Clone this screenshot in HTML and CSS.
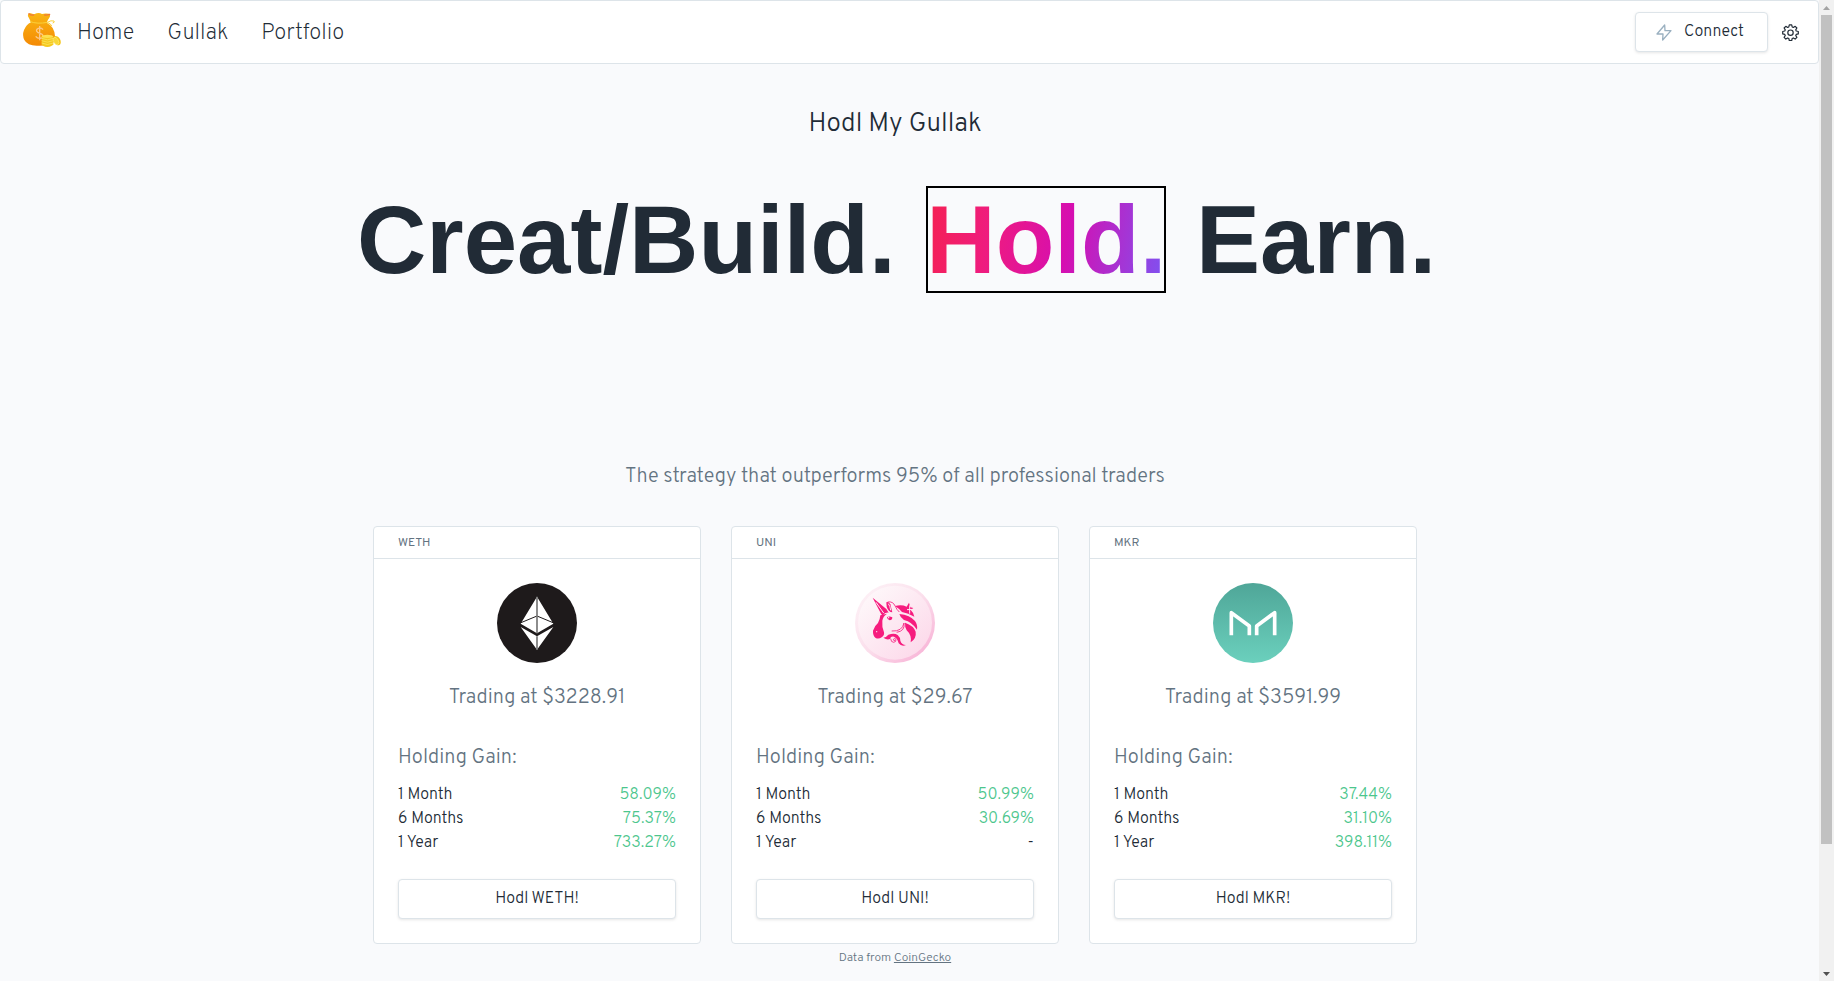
FILE: index.html
```html
<!DOCTYPE html>
<html lang="en">
<head>
<meta charset="utf-8">
<title>Hodl My Gullak</title>
<link rel="stylesheet" href="styles.css">
</head>
<body>
<header class="topbar">
  <svg class="logo" viewBox="66 33 120 108" aria-hidden="true">
    <defs>
      <linearGradient id="bag" x1="0" y1="0" x2="0" y2="1"><stop offset="0" stop-color="#f9b613"/><stop offset="1" stop-color="#f48a05"/></linearGradient>
    </defs>
    <path d="M93 64 Q89 55 84 46 Q82 36 92 37 Q102 42 110 37 Q118 34 126 39 Q134 36 147 38 Q153 42 148 50 Q142 58 140 65 Q163 76 165 105 Q166 122 154 130 Q140 135 110 134 Q82 134 73 117 Q66 102 72 87 Q79 71 93 64Z" fill="url(#bag)"/>
    <path d="M87 38 Q93 44 101 42 M134 42 Q142 43 149 40" fill="none" stroke="#ee7a3a" stroke-width="4" stroke-linecap="round"/>
    <path d="M91 62 Q112 70 142 64 Q153 57 162 60 Q165 64 159 66 M143 65 Q152 67 155 74" fill="none" stroke="#fbd13b" stroke-width="3" stroke-linecap="round"/>
    <path d="M129 86 Q124 79 115 82 Q105 87 113 94 L125 99 Q133 106 125 111 Q114 115 107 106 M119 75 V118" fill="none" stroke="#fcc88a" stroke-width="4"/>
    <path d="M125 105 V130 Q127 137 142 138 Q157 137 160 130 V105Z" fill="#f5c91f"/>
    <ellipse cx="142" cy="106" rx="17" ry="5" fill="#fde04f"/>
    <path d="M125 112 Q142 121 160 112 M125 119 Q142 128 160 119 M125 126 Q142 135 160 126" fill="none" stroke="#fdea6d" stroke-width="2"/>
    <ellipse cx="171" cy="119" rx="10" ry="15" transform="rotate(-28 171 119)" fill="#f4c417"/>
    <ellipse cx="168" cy="120" rx="7" ry="12" transform="rotate(-28 168 120)" fill="#f8d637" stroke="#fdea6d" stroke-width="2"/>
  </svg>
  <nav class="nav">
    <a href="#">Home</a>
    <a href="#">Gullak</a>
    <a href="#">Portfolio</a>
  </nav>
  <button class="btn connect" type="button">
    <svg class="bolt" viewBox="168 68 48 51" aria-hidden="true"><path d="M194 71 L171 98 H189 L188 116 L213 88 H195Z" fill="none" stroke="#9ab0c0" stroke-width="4" stroke-linejoin="round"/></svg>
    Connect
  </button>
  <button class="settings" type="button" aria-label="Settings">
    <svg viewBox="0 0 24 24" aria-hidden="true"><path d="M10.300 1.300h3.400l.7 2.900 1.600.7 2.600-1.600 2.400 2.400-1.600 2.600.7 1.600 2.900.7v3.400l-2.900.7-.7 1.600 1.600 2.600-2.400 2.400-2.600-1.600-1.600.7-.7 2.900h-3.400l-.7-2.900-1.600-.7-2.600 1.600L3 18.900l1.600-2.600-.7-1.600-2.900-.7v-3.400l2.900-.7.7-1.600L3 5.700l2.400-2.400L8 4.900l1.600-.7z" fill="none" stroke="#212b36" stroke-width="1.700" stroke-linejoin="round"/><circle cx="12" cy="12.300" r="3.800" fill="none" stroke="#212b36" stroke-width="1.700"/></svg>
  </button>
</header>

<main class="page">
  <h2 class="brand">Hodl My Gullak</h2>
  <h1 class="headline">Creat/Build. <span class="accent">Hold.</span> Earn.</h1>
  <p class="tagline">The strategy that outperforms 95% of all professional traders</p>

  <section class="cards">
    <article class="card">
      <h3 class="card-title">WETH</h3>
      <div class="card-body">
        <svg class="coin" viewBox="396 189 240 240" aria-hidden="true">
          <circle cx="516" cy="309" r="120" fill="#1e1a1b"/>
          <path d="M516 230 L565 311 L516 340 L467 311Z M467 321 L516 349 L565 321 L516 389Z" fill="#fff"/>
          <path d="M468 308 L516 288 L564 308" fill="none" stroke="#1e1a1b" stroke-width="3"/>
          <path d="M516 230 V340 M516 349 V389" stroke="#777" stroke-width="5"/>
        </svg>
        <p class="price">Trading at $3228.91</p>
        <h4 class="gain-title">Holding Gain:</h4>
        <table class="gains">
          <tr><th scope="row">1 Month</th><td>58.09%</td></tr>
          <tr><th scope="row">6 Months</th><td>75.37%</td></tr>
          <tr><th scope="row">1 Year</th><td>733.27%</td></tr>
        </table>
        <button class="btn" type="button">Hodl WETH!</button>
      </div>
    </article>
    <article class="card">
      <h3 class="card-title">UNI</h3>
      <div class="card-body">
        <svg class="coin" viewBox="390 189 240 240" aria-hidden="true">
          <defs>
            <linearGradient id="rim" x1=".1" y1=".1" x2=".9" y2=".9"><stop offset="0" stop-color="#fdf1f6"/><stop offset=".5" stop-color="#fbdfec"/><stop offset="1" stop-color="#f8b4d7"/></linearGradient>
            <linearGradient id="disc" x1=".1" y1=".1" x2=".9" y2=".9"><stop offset="0" stop-color="#fef8fa"/><stop offset="1" stop-color="#fcd9ea"/></linearGradient>
          </defs>
          <circle cx="510" cy="309" r="120" fill="url(#rim)"/>
          <circle cx="510" cy="308" r="111" fill="url(#disc)"/>
          <g fill="#f61c7e">
            <path d="M443 233 L484 267 L491 278 Q480 276 473 287 L468 281Z"/>
            <path d="M484 247 Q490 243 496 253 L502 277 Q490 276 485 260Z"/>
            <path d="M466 286 L486 281 Q474 289 472 302 Q470 320 477 337 Q479 346 470 352 Q461 358 452 354 Q443 346 444 332 Q448 318 459 309 Q465 298 466 286Z"/>
            <path d="M486 291 Q494 287 502 292 Q502 301 494 301 Q487 300 486 291Z"/>
            <path d="M510 258 Q530 253 545 260 L552 248 L556 262 L565 264 L557 270 Q566 278 568 290 Q550 279 531 276 Q520 264 510 258Z"/>
            <path d="M523 282 Q555 285 570 303 Q579 316 576 329 Q561 306 537 300 Q526 293 523 282Z"/>
            <path d="M540 308 Q566 317 572 335 Q575 355 557 367 Q561 346 545 331 Q539 320 540 308Z"/>
            <path d="M475 353 Q484 352 490 344 Q508 338 518 345 Q526 352 526 362 Q529 374 543 375 Q530 381 521 370 Q517 354 507 350 Q497 348 495 357 Q486 361 475 353Z"/>
          </g>
          <g fill="none" stroke="#f61c7e" stroke-width="2.500">
            <path d="M488 246 Q504 243 511 259 Q515 269 523 276 M500 333 Q532 335 537 309 Q541 333 515 337"/>
            <path d="M497 356 Q498 367 506 367 Q514 366 513 358 Q509 353 505 358 Q505 363 510 361"/>
          </g>
          <path d="M453 247 L476 279 M490 251 Q496 259 497 271 M546 269 L562 268 M554 256 V281" fill="none" stroke="#fdeaf3" stroke-width="3"/>
          <circle cx="455" cy="335" r="2" fill="#fdeaf3"/><circle cx="491" cy="293" r="2" fill="#fff"/>
        </svg>
        <p class="price">Trading at $29.67</p>
        <h4 class="gain-title">Holding Gain:</h4>
        <table class="gains">
          <tr><th scope="row">1 Month</th><td>50.99%</td></tr>
          <tr><th scope="row">6 Months</th><td>30.69%</td></tr>
          <tr><th scope="row">1 Year</th><td class="none">-</td></tr>
        </table>
        <button class="btn" type="button">Hodl UNI!</button>
      </div>
    </article>
    <article class="card">
      <h3 class="card-title">MKR</h3>
      <div class="card-body">
        <svg class="coin" viewBox="384 189 240 240" aria-hidden="true">
          <defs><linearGradient id="mkr" x1="0" y1="0" x2="0" y2="1"><stop offset="0" stop-color="#4fa698"/><stop offset="1" stop-color="#6bd0bd"/></linearGradient></defs>
          <circle cx="504" cy="309" r="120" fill="url(#mkr)"/>
          <path d="M439 346 V278 L493 318 V346 M569 346 V278 L515 318 V346" fill="none" stroke="#fff" stroke-width="11" stroke-linejoin="round"/>
        </svg>
        <p class="price">Trading at $3591.99</p>
        <h4 class="gain-title">Holding Gain:</h4>
        <table class="gains">
          <tr><th scope="row">1 Month</th><td>37.44%</td></tr>
          <tr><th scope="row">6 Months</th><td>31.10%</td></tr>
          <tr><th scope="row">1 Year</th><td>398.11%</td></tr>
        </table>
        <button class="btn" type="button">Hodl MKR!</button>
      </div>
    </article>
  </section>
  <p class="source">Data from <a href="#">CoinGecko</a></p>
</main>

<div class="scrollbar" aria-hidden="true">
  <svg class="arrow" viewBox="0 0 15 15"><path d="M4 10 L7.500 6 L11 10Z" fill="#a3a3a3"/></svg>
  <span class="thumb"></span>
  <svg class="arrow down" viewBox="0 0 15 15"><path d="M4 6 L7.500 10 L11 6Z" fill="#505050"/></svg>
</div>
</body>
</html>
```
FILE: styles.css
```css
* { box-sizing: border-box; }

html { overflow: hidden; }

body {
  margin: 0;
  padding-right: 15px;
  background: #f9fafc;
  color: #212b36;
  font: 300 16px/24px Overpass, Roboto, sans-serif;
}

h1, h2, h3, h4, p { margin: 0; font-weight: inherit; }

.topbar {
  display: flex;
  align-items: center;
  height: 64px;
  padding: 0 20px 0 21px;
  background: #fff;
  border: 1px solid #dde4e9;
  border-radius: 4px;
}

.logo { width: 40px; height: 36px; margin: 0 15px 5px 0; }

.nav { display: flex; gap: 33px; margin-right: auto; padding-top: 4px; }
.nav a { color: inherit; font-size: 22px; font-weight: 200; text-decoration: none; }

.btn {
  display: block;
  width: 100%;
  height: 40px;
  padding: 0;
  background: #fff;
  border: 1px solid #dde4e9;
  border-radius: 4px;
  box-shadow: 0 1px 3px rgba(0, 0, 0, 0.1);
  color: inherit;
  font: inherit;
}

.connect {
  display: flex;
  align-items: center;
  justify-content: center;
  gap: 12px;
  width: 133px;
  padding-right: 3px;
}
.bolt { width: 16px; height: 17px; }

.settings {
  margin-left: 14px;
  margin-right: -1px;
  padding: 0;
  background: none;
  border: 0;
  line-height: 0;
}
.settings svg { width: 17px; height: 17px; }

.page {
  display: flex;
  flex-direction: column;
  align-items: center;
  padding: 41px 29px 0 0;
}

.brand { font-size: 26px; line-height: 40px; }

.headline {
  margin-top: 41px;
  padding-left: 3px;
  font: 700 96px/107px "Liberation Sans", Arial, sans-serif;
}

.accent {
  margin: 0 3px 0 4px;
  background: linear-gradient(100deg, #f5214f, #ef1c7e 27%, #d60eb0 58%, #7b55f4);
  background-clip: text;
  -webkit-background-clip: text;
  color: transparent;
  outline: 2px solid #000;
  outline-offset: -2px;
}

.tagline { margin-top: 168px; font-size: 20px; line-height: 32px; color: #637381; }

.cards {
  display: grid;
  grid-template-columns: repeat(3, 328px);
  gap: 30px;
  margin-top: 33px;
}

.card { background: #fff; border: 1px solid #dde4e9; border-radius: 4px; }

.card-title {
  padding: 2px 24px 0;
  border-bottom: 1px solid #dde4e9;
  font-size: 12px;
  font-weight: 400;
  line-height: 29px;
  color: #637381;
}

.card-body { padding: 24px; }

.coin { display: block; width: 80px; height: 80px; margin: 0 auto; }

.price, .gain-title { font-size: 20px; line-height: 32px; color: #637381; }
.price { margin-top: 19px; text-align: center; }
.gain-title { margin: 28px 0 9px; }

.gains { width: 100%; margin-bottom: 24px; border-collapse: collapse; }
.gains th, .gains td { padding: 0; font-weight: inherit; text-align: left; }
.gains td { color: #4cc68d; text-align: right; }
.gains .none { color: inherit; }

.source { margin-top: 2px; font-size: 12px; color: #637381; }
.source a { color: inherit; }

.scrollbar {
  position: fixed;
  inset: 0 0 0 auto;
  display: flex;
  flex-direction: column;
  align-items: center;
  width: 15px;
  background: #f1f1f1;
}
.arrow { width: 15px; height: 15px; }
.down { margin-top: auto; }
.thumb { flex: 0 0 84.5%; width: 11px; background: #c1c1c1; }
```
